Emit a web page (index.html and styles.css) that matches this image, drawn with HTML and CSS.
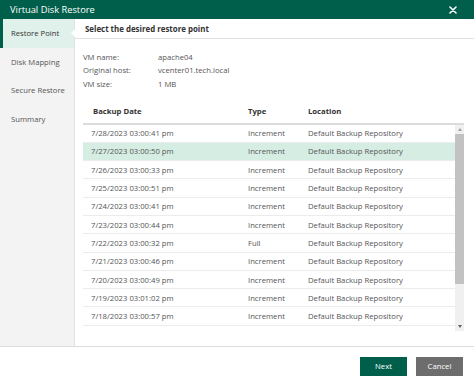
FILE: index.html
```html
<!DOCTYPE html>
<html lang="en">
<head>
    <meta charset="UTF-8">
    <meta name="viewport" content="width=device-width, initial-scale=1.0">
    <title>Virtual Disk Restore</title>
    <link rel="stylesheet" href="styles.css">
</head>
<body>
    <div class="window">
        <div class="titlebar">
            <span class="title">Virtual Disk Restore</span>
            <svg class="close" width="8" height="8" viewBox="0 0 8 8">
                <path d="M1 1 L7 7 M7 1 L1 7" stroke="#fff" stroke-width="1.6" stroke-linecap="round"/>
            </svg>
        </div>

        <div class="main">
            <div class="sidebar">
                <div class="step active">Restore Point</div>
                <div class="step">Disk Mapping</div>
                <div class="step">Secure Restore</div>
                <div class="step">Summary</div>
            </div>

            <div class="content">
                <div class="content-head">Select the desired restore point</div>
                <div class="content-body">
                    <div class="info">
                        <div class="info-row"><span class="label">VM name:</span><span>apache04</span></div>
                        <div class="info-row"><span class="label">Original host:</span><span>vcenter01.tech.local</span></div>
                        <div class="info-row"><span class="label">VM size:</span><span>1 MB</span></div>
                    </div>

                    <div class="grid">
                        <div class="grid-head">
                            <span class="col-date">Backup Date</span>
                            <span class="col-type">Type</span>
                            <span class="col-loc">Location</span>
                        </div>
                        <div class="grid-body">
                            <div class="rows" id="rows"></div>
                            <div class="scroll">
                                <div class="arrow up"></div>
                                <div class="track"><div class="thumb"></div></div>
                                <div class="arrow down"></div>
                            </div>
                        </div>
                    </div>
                </div>
            </div>
        </div>

        <div class="footer">
            <button class="btn btn-next">Next</button>
            <button class="btn btn-cancel">Cancel</button>
        </div>
    </div>

    <script>
        const points = [
            ['7/28/2023 03:00:41 pm', 'Increment'],
            ['7/27/2023 03:00:50 pm', 'Increment'],
            ['7/26/2023 03:00:33 pm', 'Increment'],
            ['7/25/2023 03:00:51 pm', 'Increment'],
            ['7/24/2023 03:00:41 pm', 'Increment'],
            ['7/23/2023 03:00:44 pm', 'Increment'],
            ['7/22/2023 03:00:32 pm', 'Full'],
            ['7/21/2023 03:00:46 pm', 'Increment'],
            ['7/20/2023 03:00:49 pm', 'Increment'],
            ['7/19/2023 03:01:02 pm', 'Increment'],
            ['7/18/2023 03:00:57 pm', 'Increment']
        ];

        let html = '';
        points.forEach((p, i) => {
            html += `<div class="row${i === 1 ? ' selected' : ''}">
                <span class="col-date">${p[0]}</span>
                <span class="col-type">${p[1]}</span>
                <span class="col-loc">Default Backup Repository</span>
            </div>`;
        });
        document.getElementById('rows').innerHTML = html;
    </script>
</body>
</html>
```

FILE: styles.css
```css
* {
    box-sizing: border-box;
}
body {
    margin: 0;
    font-family: 'Open Sans', 'Liberation Sans', sans-serif;
    font-size: 7.7px;
    color: #555;
    background: #fff;
}
.window {
    width: 474px;
    height: 385px;
    display: flex;
    flex-direction: column;
}
.titlebar {
    height: 19px;
    background: #005f4b;
    color: #fff;
    display: flex;
    align-items: center;
    justify-content: space-between;
    padding: 0 17px 0 10px;
}
.title {
    font-size: 9.3px;
}
.main {
    height: 328px;
    display: flex;
    border-bottom: 1px solid #dcdcdc;
}
.sidebar {
    width: 75px;
    background: #f3f3f3;
    border-right: 1px solid #e2e2e2;
}
.step {
    height: 28.5px;
    display: flex;
    align-items: center;
    padding-left: 11px;
    color: #555;
}
.step.active {
    position: relative;
    background: #e0f0ea;
    border-left: 3px solid #005f4b;
    padding-left: 8px;
    color: #333;
}
.step.active::after {
    content: '';
    position: absolute;
    right: -1px;
    top: 10px;
    border-top: 4px solid transparent;
    border-bottom: 4px solid transparent;
    border-right: 4px solid #fff;
}
.content {
    flex: 1;
    display: flex;
    flex-direction: column;
}
.content-head {
    height: 20px;
    padding-left: 10px;
    display: flex;
    align-items: center;
    font-size: 7.9px;
    font-weight: 700;
    color: #333;
    border-bottom: 1.5px solid #e2e2e2;
}
.content-body {
    padding: 11px 10px 0 8px;
}
.info-row {
    height: 13.5px;
    display: flex;
    align-items: center;
}
.label {
    width: 75px;
}
.grid {
    margin-top: 8px;
}
.grid-head {
    height: 26px;
    display: flex;
    align-items: center;
    font-weight: 700;
    color: #333;
    border-bottom: 2px solid #dcdcdc;
}
.grid-head .col-date {
    padding-left: 10px;
}
.grid-body {
    display: flex;
}
.rows {
    flex: 1;
}
.row {
    height: 18.3px;
    display: flex;
    align-items: center;
    border-bottom: 1px solid #ececec;
}
.row.selected {
    background: #d5ede3;
}
.col-date {
    width: 165px;
    padding-left: 8px;
}
.col-type {
    width: 60px;
}
.scroll {
    width: 9px;
    background: #f0f0f0;
    display: flex;
    flex-direction: column;
    align-items: center;
    height: 206px;
}
.arrow {
    height: 9px;
    width: 9px;
    display: flex;
    align-items: center;
    justify-content: center;
}
.arrow::before {
    content: '';
    border-left: 2.5px solid transparent;
    border-right: 2.5px solid transparent;
}
.arrow.up::before {
    border-bottom: 3px solid #a0a0a0;
}
.arrow.down::before {
    border-top: 3px solid #606060;
}
.track {
    flex: 1;
    width: 9px;
}
.thumb {
    height: 150px;
    background: #c2c2c2;
}
.footer {
    flex: 1;
    display: flex;
    justify-content: flex-end;
    align-items: center;
    gap: 9px;
    padding: 0 11px 0 0;
}
.btn {
    width: 47px;
    height: 19px;
    border: none;
    color: #fff;
    font-family: 'Open Sans', 'Liberation Sans', sans-serif;
    font-size: 7.7px;
    padding: 0;
}
.btn-next {
    background: #005f4b;
}
.btn-cancel {
    background: #6d6d6d;
}
```
